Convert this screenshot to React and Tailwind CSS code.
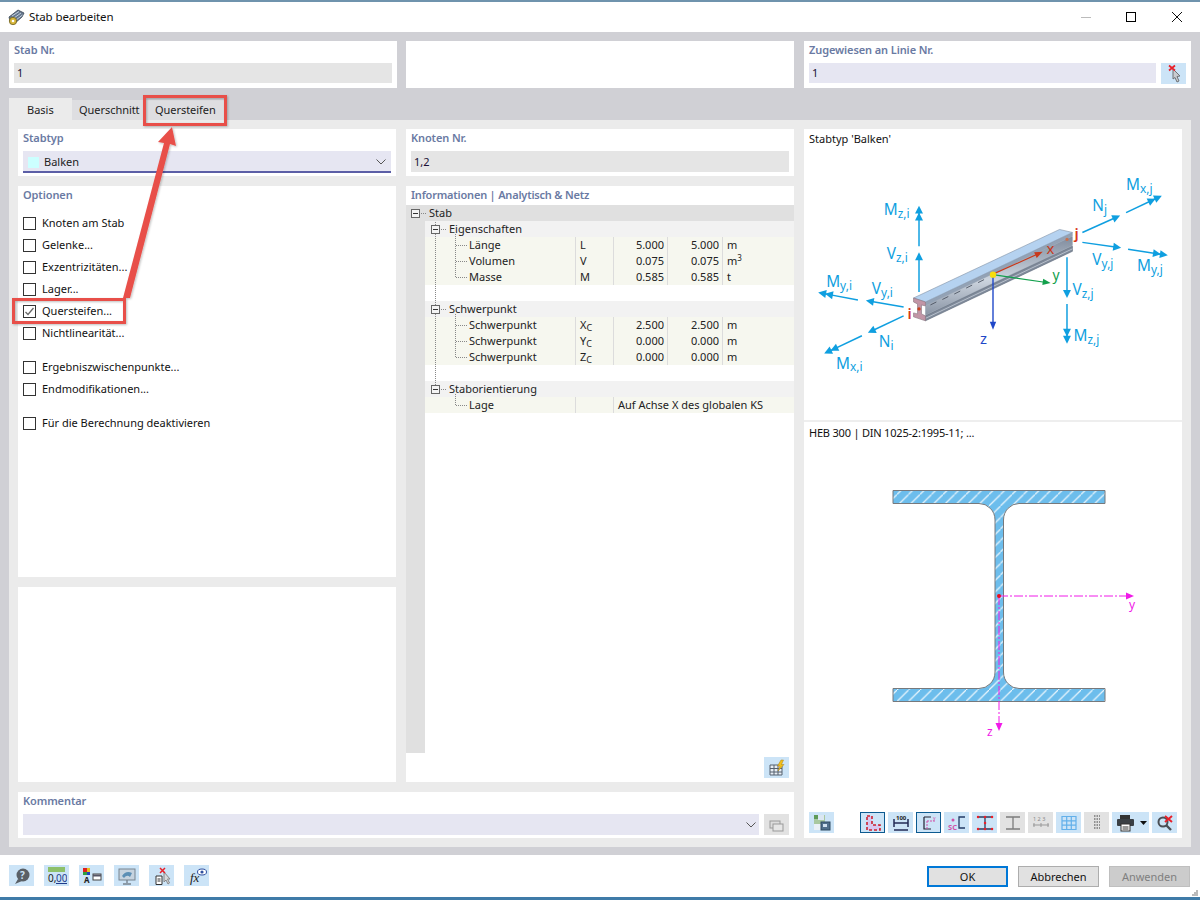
import React from "react";

const FONT = "font-['Noto_Sans','Open_Sans',sans-serif]";

function Panel({ title, className = "", children }) {
  return (
    <div className={"bg-white flex flex-col " + className}>
      {title && <div className="h-[22px] pl-[5px] text-[11px] leading-[17px] font-semibold tracking-[-0.1px] text-[#6a7aa3]">{title}</div>}
      {children}
    </div>
  );
}

function Field({ children, className = "", grey = true }) {
  return (
    <div className={"h-[20px] pl-[3px] text-[11px] leading-[20px] text-[#1a1033] " + (grey ? "bg-[#e5e5e5] " : "bg-[#e6e6f2] ") + className}>{children}</div>
  );
}

function Check({ label, checked }) {
  return (
    <div className="h-[22px] flex items-center pl-[5px]">
      <div className="w-[13px] h-[13px] border border-[#333] bg-white flex items-center justify-center">
        {checked && (
          <svg width="11" height="11" viewBox="0 0 11 11"><path d="M1.5 6 L4 8.5 L9.5 2" fill="none" stroke="#666" strokeWidth="1.3" /></svg>
        )}
      </div>
      <span className="ml-[6px] text-[11px] text-[#111]">{label}</span>
    </div>
  );
}

function Chevron() {
  return (
    <svg width="10" height="6" viewBox="0 0 10 6"><path d="M0.5 0.5 L5 5 L9.5 0.5" fill="none" stroke="#555" strokeWidth="1" /></svg>
  );
}

function Sub({ a, b }) {
  return <span>{a}<span className="text-[9px] relative top-[2px]">{b}</span></span>;
}

function Row({ label, sym, v1, v2, unit, span }) {
  return (
    <div className="h-[16px] flex bg-[#f6f7ef] text-[11px] leading-[16px] text-[#222]">
      <div className="w-[150px] pl-[44px]">{label}</div>
      <div className="w-[38px] border-l border-[#dcdcdc] pl-[4px]">{sym}</div>
      {span ? (
        <div className="flex-1 border-l border-[#dcdcdc] pl-[4px]">{span}</div>
      ) : (
        <>
          <div className="w-[54px] border-l border-[#dcdcdc] text-right pr-[3px]">{v1}</div>
          <div className="w-[55px] border-l border-[#dcdcdc] text-right pr-[3px]">{v2}</div>
          <div className="flex-1 border-l border-[#dcdcdc] pl-[4px]">{unit}</div>
        </>
      )}
    </div>
  );
}

function Group({ label }) {
  return <div className="h-[16px] bg-[#f2f2f2] pl-[24px] text-[11px] leading-[16px] text-[#222]">{label}</div>;
}

function TreeLines() {
  const box = (x, y) => (
    <g key={x + "-" + y}>
      <rect x={x + 0.5} y={y + 0.5} width="8" height="8" fill="#f4f4f4" stroke="#666" />
      <path d={`M${x + 2} ${y + 4.5} H${x + 7}`} stroke="#333" />
    </g>
  );
  const d = "1 1";
  return (
    <svg className="absolute left-0 top-0 pointer-events-none" width="70" height="220" viewBox="406 205 70 220">
      <path d="M435.5 222 V390" stroke="#888" strokeDasharray={d} fill="none" />
      <path d="M421 213.5 H427 M441 229.5 H447 M441 309.5 H447 M441 389.5 H447" stroke="#888" strokeDasharray={d} fill="none" />
      <path d="M455.5 234 V277.5 M455.5 314 V357.5 M455.5 394 V405.5" stroke="#888" strokeDasharray={d} fill="none" />
      <path d="M456 245.5 H467 M456 261.5 H467 M456 277.5 H467 M456 325.5 H467 M456 341.5 H467 M456 357.5 H467 M456 405.5 H467" stroke="#888" strokeDasharray={d} fill="none" />
      {box(411, 209)}
      {box(431, 225)}
      {box(431, 305)}
      {box(431, 385)}
    </svg>
  );
}

function Arrow({ x1, y1, x2, y2, dbl, c = "#0f9fe0", w = 1.5, h = 8, hw = 4 }) {
  const a = Math.atan2(y2 - y1, x2 - x1);
  const head = (tx, ty) => {
    const bx = tx - h * Math.cos(a), by = ty - h * Math.sin(a);
    const nx = -Math.sin(a) * hw, ny = Math.cos(a) * hw;
    return `${tx},${ty} ${bx + nx},${by + ny} ${bx - nx},${by - ny}`;
  };
  return (
    <g>
      <line x1={x1} y1={y1} x2={x2 - (h - 2) * Math.cos(a)} y2={y2 - (h - 2) * Math.sin(a)} stroke={c} strokeWidth={w} />
      <polygon points={head(x2, y2)} fill={c} />
      {dbl && <polygon points={head(x2 - 7 * Math.cos(a), y2 - 7 * Math.sin(a))} fill={c} />}
    </g>
  );
}

function L({ x, y, m, s }) {
  return (
    <text x={x} y={y} fill="#0f9fe0" fontSize="15.5" fontFamily="'Noto Sans',sans-serif">
      {m}
      <tspan fontSize="12" dy="3">{s}</tspan>
    </text>
  );
}

function BeamDiagram() {
  return (
    <svg width="378" height="270" viewBox="804 152 378 270">
      <defs>
        <linearGradient id="web" x1="0" y1="0" x2="0" y2="1">
          <stop offset="0" stopColor="#7f8b9d" />
          <stop offset="0.55" stopColor="#cdd5df" />
          <stop offset="1" stopColor="#8a95a5" />
        </linearGradient>
      </defs>
      <polygon points="925,303 1073,233 1073,252 925,322" fill="#a3adbb" />
      <polygon points="925,307 1073,237 1073,246 925,316" fill="url(#web)" />
      <polygon points="925,303 1073,233 1073,236.5 925,306.5" fill="#93a2b5" />
      <polygon points="925,317 1073,247 1073,252 925,322" fill="#7f8a9a" stroke="#646e7c" strokeWidth="0.5" />
      <path d="M925 319.5 L1073 249.5" stroke="#c6ced8" strokeWidth="0.8" />
      <polygon points="913,299 1060,230 1073,233 925,303" fill="#b5d2f0" stroke="#7f8fa3" strokeWidth="0.6" />
      <path d="M930 306 L936 303 M942 300.5 L948 297.5 M954 295 L960 292 M966 289 L972 286 M978 283.5 L984 280.5" stroke="#4a5260" strokeWidth="0.9" />
      <polygon points="913,299 925,303 925,307 921,306 921,315 925,317 925,322 913,318 913,314 917,315 917,305 913,303" fill="#c295a6" stroke="#85727e" strokeWidth="0.6" />
      <circle cx="918.5" cy="310" r="1.7" fill="#c8431f" />
      <circle cx="1067.5" cy="240" r="1.6" fill="#c8704f" />
      <Arrow x1={993} y1={275} x2={1043} y2={252.5} c="#c8381a" w={1.2} hw={3.2} />
      <Arrow x1={993} y1={275.5} x2={1051} y2={284} c="#12a04c" w={1.2} hw={3.2} />
      <Arrow x1={993} y1={276} x2={993} y2={331} c="#1f47c8" w={1.4} hw={3.2} />
      <circle cx="993" cy="275.5" r="3.2" fill="#f7dc0d" />
      <text x="1047" y="255" fill="#c8381a" fontSize="15" fontFamily="'Noto Sans',sans-serif">x</text>
      <text x="1053" y="281" fill="#12a04c" fontSize="14" fontFamily="'Noto Sans',sans-serif">y</text>
      <text x="980" y="345" fill="#1f47c8" fontSize="15" fontFamily="'Noto Sans',sans-serif">z</text>
      <text x="907" y="320" fill="#d8381a" fontSize="15" fontWeight="600" fontFamily="'Noto Sans',sans-serif">i</text>
      <text x="1075" y="240" fill="#d8381a" fontSize="15" fontWeight="600" fontFamily="'Noto Sans',sans-serif">j</text>
      <Arrow x1={918.5} y1={247} x2={918.5} y2={206} dbl />
      <Arrow x1={918.5} y1={293} x2={918.5} y2={253} />
      <Arrow x1={857} y1={301} x2={817} y2={293.5} dbl />
      <Arrow x1={903} y1={308} x2={865} y2={301.5} />
      <Arrow x1={903} y1={317} x2={867} y2={334} />
      <Arrow x1={861} y1={337} x2={823} y2={355} dbl />
      <Arrow x1={1083} y1={233} x2={1121} y2={216} />
      <Arrow x1={1127} y1={213} x2={1163} y2={196} dbl />
      <Arrow x1={1083} y1={243} x2={1122} y2={248.5} />
      <Arrow x1={1129} y1={250} x2={1169} y2={256} dbl />
      <Arrow x1={1067.5} y1={258} x2={1067.5} y2={299} />
      <Arrow x1={1067.5} y1={305} x2={1067.5} y2={345} dbl />
      <L x={883} y={215} m="M" s="z,i" />
      <L x={886} y={260} m="V" s="z,i" />
      <L x={825} y={288} m="M" s="y,i" />
      <L x={871} y={295} m="V" s="y,i" />
      <L x={878} y={348} m="N" s="i" />
      <L x={835} y={370} m="M" s="x,i" />
      <L x={1093} y={211} m="N" s="j" />
      <L x={1127} y={190} m="M" s="x,j" />
      <L x={1093} y={266} m="V" s="y,j" />
      <L x={1138} y={272} m="M" s="y,j" />
      <L x={1073} y={296} m="V" s="z,j" />
      <L x={1074} y={342} m="M" s="z,j" />
    </svg>
  );
}

function SectionDiagram() {
  const p = "M893 490.5 H1105 V503.5 H1019 A15.5 16.5 0 0 0 1003.5 520 V672 A15.5 16.5 0 0 0 1019 688.5 H1105 V701.5 H893 V688.5 H979 A16 16.5 0 0 0 995 672 V520 A16 16.5 0 0 0 979 503.5 H893 Z";
  return (
    <svg width="378" height="340" viewBox="804 440 378 340">
      <defs>
        <pattern id="hatch2" width="11.5" height="11.5" patternUnits="userSpaceOnUse">
          <rect width="11.5" height="11.5" fill="#6cbdec" />
          <path d="M-1 12.5 L12.5 -1" stroke="#eaf6fd" strokeWidth="1.2" />
        </pattern>
      </defs>
      <path d={p} fill="url(#hatch2)" stroke="#77797c" strokeWidth="1" />
      <line x1="999" y1="596" x2="1128" y2="596" stroke="#f01ae8" strokeWidth="1" strokeDasharray="9 2 2 2" />
      <polygon points="1134,596 1126,592.5 1126,599.5" fill="#f01ae8" />
      <line x1="999" y1="596" x2="999" y2="725" stroke="#f01ae8" strokeWidth="1" strokeDasharray="9 2 2 2" />
      <polygon points="999,731 995.5,723 1002.5,723" fill="#f01ae8" />
      <circle cx="999" cy="596" r="2" fill="#ee0a1a" />
      <text x="1129" y="609" fill="#f01ae8" fontSize="12" fontFamily="'Noto Sans',sans-serif">y</text>
      <text x="987" y="736" fill="#f01ae8" fontSize="12" fontFamily="'Noto Sans',sans-serif">z</text>
    </svg>
  );
}

function IconBtn({ x = 25, grey, sel, children, className = "" }) {
  return (
    <div
      className={
        "h-[21px] shrink-0 flex items-center justify-center " +
        (x === 37 ? "w-[37px] " : "w-[25px] ") +
        (grey ? "bg-[#e2e2e2] " : "bg-[#cce4f7] ") +
        (sel ? "border border-[#0c5a90] " : "") +
        className
      }
    >
      {children}
    </div>
  );
}

const S = ({ children, w = 20, h = 18, vb = "0 0 20 18" }) => <svg width={w} height={h} viewBox={vb}>{children}</svg>;

const cursorX = (
  <S w="20" h="20" vb="0 0 20 20">
    <path d="M9 5 L9 15 L11 13.5 L13 18 L15 17 L13 12.5 L16 12 Z" fill="#c9ccd0" stroke="#6f7276" />
    <path d="M5 1.5 L11 6.5 M11 1.5 L5 6.5" stroke="#e8202a" strokeWidth="1.7" />
  </S>
);

function TitleIcon() {
  return (
    <svg width="17" height="17" viewBox="0 0 17 17">
      <path d="M1 8 L10 1 L16 4 L14 8 L6 15 L2 12 Z" fill="#66788f" stroke="#3a4656" strokeWidth="0.8" />
      <path d="M4 7 L11 2.5 M6 9 L13 4 M8 11 L14.5 6" stroke="#c4d0df" strokeWidth="1" />
      <circle cx="5" cy="12" r="3.7" fill="#d6b53a" stroke="#6f6120" strokeWidth="0.8" />
      <circle cx="5" cy="12" r="1.3" fill="#fff" />
    </svg>
  );
}

export default function App() {
  return (
    <div className={"relative w-[1200px] h-[900px] bg-white overflow-hidden flex flex-col " + FONT}>
      <div className="h-[2px] bg-[#6f93ad] shrink-0" />
      <div className="h-[30px] shrink-0 flex items-center pl-[8px]">
        <TitleIcon />
        <span className="ml-[4px] text-[11.5px] tracking-[-0.1px] text-[#111]">Stab bearbeiten</span>
        <div className="ml-auto flex items-center pr-[18px]">
          <div className="w-[10px] h-[1px] bg-[#bbb]" />
          <div className="ml-[35px] w-[10px] h-[10px] border border-black" />
          <svg className="ml-[36px]" width="10" height="10" viewBox="0 0 10 10"><path d="M0 0 L10 10 M10 0 L0 10" stroke="#111" strokeWidth="1" /></svg>
        </div>
      </div>

      <div className="h-[823px] shrink-0 bg-[#d0d0d5] pt-[9px] px-[9px] flex flex-col">
        <div className="h-[47px] flex shrink-0">
          <Panel title="Stab Nr." className="w-[388px]">
            <div className="px-[5px]"><Field>1</Field></div>
          </Panel>
          <div className="w-[388px] ml-[9px] bg-white" />
          <Panel title="Zugewiesen an Linie Nr." className="w-[387px] ml-[10px]">
            <div className="pl-[5px] pr-[5px] flex gap-[5px]">
              <Field grey={false} className="flex-1">1</Field>
              <IconBtn>{cursorX}</IconBtn>
            </div>
          </Panel>
        </div>

        <div className="mt-[10px] h-[22px] flex shrink-0 items-end text-[11px] text-[#222]">
          <div className="w-[63px] h-[22px] bg-[#ebebeb] pl-[18px] leading-[24px]">Basis</div>
          <div className="w-[71px] h-[20px] bg-[#dedee1] pl-[7px] leading-[20px] tracking-[-0.05px]">Querschnitt</div>
          <div className="w-[81px] h-[20px] bg-[#dedee1] pl-[12px] leading-[20px] tracking-[-0.05px]">Quersteifen</div>
        </div>

        <div className="h-[727px] shrink-0 bg-[#ebebeb] p-[9px] flex">
          <div className="w-[776px] flex flex-col">
            <div className="h-[653px] flex gap-[10px]">
              <div className="w-[378px] flex flex-col gap-[10px]">
                <Panel title="Stabtyp" className="h-[47px]">
                  <div className="mx-[5px] h-[22px] pt-[2px] bg-[#e6e6f2] border-b-2 border-[#5b5ea6] flex items-center pl-[5px] pr-[5px]">
                    <div className="w-[11px] h-[11px] bg-[#ccffff]" />
                    <span className="ml-[5px] text-[11px] text-[#222]">Balken</span>
                    <span className="ml-auto flex"><Chevron /></span>
                  </div>
                </Panel>
                <Panel title="Optionen" className="h-[391px]">
                  <div className="pt-[4px]">
                    <Check label="Knoten am Stab" />
                    <Check label="Gelenke..." />
                    <Check label="Exzentrizitäten..." />
                    <Check label="Lager..." />
                    <Check label="Quersteifen..." checked />
                    <Check label="Nichtlinearität..." />
                    <div className="h-[12px]" />
                    <Check label="Ergebniszwischenpunkte..." />
                    <Check label="Endmodifikationen..." />
                    <div className="h-[12px]" />
                    <Check label="Für die Berechnung deaktivieren" />
                  </div>
                </Panel>
                <div className="h-[195px] bg-white" />
              </div>
              <div className="w-[388px] flex flex-col gap-[10px]">
                <Panel title="Knoten Nr." className="h-[47px]">
                  <div className="px-[5px]"><Field className="h-[21px] leading-[22px]">1,2</Field></div>
                </Panel>
                <div className="h-[596px] bg-white flex flex-col relative">
                  <div className="h-[19px] pl-[5px] text-[11px] leading-[17px] font-semibold tracking-[-0.2px] text-[#6a7aa3]">Informationen | Analytisch &amp; Netz</div>
                  <div className="relative flex-1 flex">
                    <div className="w-[19px] h-[548px] bg-[#e0e0e0] shrink-0" />
                    <div className="flex-1 flex flex-col">
                      <div className="h-[16px] bg-[#e0e0e0] pl-[4px] text-[11px] leading-[16px] text-[#222]">Stab</div>
                      <Group label="Eigenschaften" />
                      <Row label="Länge" sym="L" v1="5.000" v2="5.000" unit="m" />
                      <Row label="Volumen" sym="V" v1="0.075" v2="0.075" unit={<span>m<sup className="text-[8px]">3</sup></span>} />
                      <Row label="Masse" sym="M" v1="0.585" v2="0.585" unit="t" />
                      <div className="h-[16px]" />
                      <Group label="Schwerpunkt" />
                      <Row label="Schwerpunkt" sym={<Sub a="X" b="C" />} v1="2.500" v2="2.500" unit="m" />
                      <Row label="Schwerpunkt" sym={<Sub a="Y" b="C" />} v1="0.000" v2="0.000" unit="m" />
                      <Row label="Schwerpunkt" sym={<Sub a="Z" b="C" />} v1="0.000" v2="0.000" unit="m" />
                      <div className="h-[16px]" />
                      <Group label="Staborientierung" />
                      <Row label="Lage" sym="" span="Auf Achse X des globalen KS" />
                    </div>
                    <TreeLines />
                    <div className="absolute right-[5px] bottom-[4px]">
                      <IconBtn>
                        <S>
                          <path d="M3 6 H15 V16 H3 Z M7 6 V16 M11 6 V16 M3 9.5 H15 M3 13 H15" fill="#e8eef5" stroke="#55606e" strokeWidth="1" />
                          <path d="M14 1 L10.5 7 H13 L11 12 L17 5.5 H14.5 L16.5 1 Z" fill="#f3c019" stroke="#a8801a" strokeWidth="0.5" />
                        </S>
                      </IconBtn>
                    </div>
                  </div>
                </div>
              </div>
            </div>
            <Panel title="Kommentar" className="mt-[10px] h-[47px]">
              <div className="px-[5px] flex gap-[5px]">
                <div className="flex-1 h-[21px] bg-[#e6e6f2] flex items-center justify-end pr-[3px]"><Chevron /></div>
                <IconBtn grey>
                  <S>
                    <rect x="3" y="5" width="10" height="7" fill="#ddd" stroke="#999" />
                    <rect x="6" y="8" width="10" height="7" fill="#e6e6e6" stroke="#999" />
                  </S>
                </IconBtn>
              </div>
            </Panel>
          </div>

          <div className="w-[378px] ml-[10px] bg-white flex flex-col">
            <div className="h-[293px] border-b-2 border-[#eeeeee] flex flex-col">
              <div className="h-[23px] pl-[5px] pt-[1px] text-[11px] leading-[18px] text-[#111]">Stabtyp 'Balken'</div>
              <BeamDiagram />
            </div>
            <div className="flex-1 flex flex-col">
              <div className="h-[18px] pl-[5px] text-[11px] leading-[22px] tracking-[-0.2px] text-[#111]">HEB 300 | DIN 1025-2:1995-11; ...</div>
              <SectionDiagram />
              <div className="mt-auto mb-[5px] pl-[5px] flex">
                <IconBtn>
                  <S>
                    <rect x="2" y="1" width="11" height="9" fill="#a9c8a0" />
                    <rect x="2" y="1" width="4" height="4" fill="#5f9a58" />
                    <rect x="6" y="1" width="6" height="5" fill="#dbe7f2" />
                    <rect x="2" y="10" width="8" height="6" fill="#eaf0f6" />
                    <rect x="9" y="8" width="9" height="8" fill="#51708c" stroke="#2f4a63" />
                    <rect x="11" y="10" width="4" height="3" fill="#cfe0ef" />
                  </S>
                </IconBtn>
                <div className="w-[26px]" />
                <div className="flex gap-[3px]">
                  <IconBtn sel>
                    <S>
                      <path d="M4 2 H9 V11 H17 V16 H4 Z" fill="#d8c8f0" stroke="#cc2030" strokeWidth="1.6" strokeDasharray="3 2" />
                    </S>
                  </IconBtn>
                  <IconBtn>
                    <S>
                      <path d="M3 5 V13 M17 5 V13 M3 9 H17 M3 16 H17" stroke="#222a55" strokeWidth="1.5" />
                      <text x="5" y="6" fontSize="6" fontWeight="700" fill="#222" fontFamily="'Noto Sans',sans-serif">100</text>
                    </S>
                  </IconBtn>
                  <IconBtn sel>
                    <S>
                      <path d="M5 3 H12 M5 3 V15 H12" fill="none" stroke="#223" strokeWidth="1.2" />
                      <path d="M8 7 H16 M8 7 V15" fill="none" stroke="#d050a8" strokeWidth="1" strokeDasharray="2 1" />
                      <text x="14" y="6" fontSize="5" fill="#d050a8" fontFamily="'Noto Sans',sans-serif">y</text>
                    </S>
                  </IconBtn>
                  <IconBtn>
                    <S>
                      <circle cx="6" cy="6" r="1.5" fill="#d050a8" />
                      <text x="1" y="16" fontSize="7.5" fontWeight="700" fill="#d050a8" fontFamily="'Noto Sans',sans-serif">SC</text>
                      <path d="M18 3 H12 V14 H18" fill="none" stroke="#223a66" strokeWidth="1.3" />
                    </S>
                  </IconBtn>
                  <IconBtn>
                    <S>
                      <path d="M3 3 H17 M10 3 V15 M3 15 H17" stroke="#2c3e60" strokeWidth="1.3" />
                      <path d="M3 3 h.1 M10 3 h.1 M17 3 h.1 M3 15 h.1 M10 15 h.1 M17 15 h.1 M10 9 h.1" stroke="#e8202a" strokeWidth="2.4" strokeLinecap="round" />
                    </S>
                  </IconBtn>
                  <IconBtn grey>
                    <S><path d="M3 3 H17 M10 3 V15 M3 15 H17" stroke="#7c7c7c" strokeWidth="1.3" /></S>
                  </IconBtn>
                  <IconBtn grey>
                    <S>
                      <path d="M2 11 H18 M3 9 V13 M10 9 V13 M17 9 V13" stroke="#999" strokeWidth="1" />
                      <text x="2" y="7" fontSize="5.5" fill="#888" fontFamily="'Noto Sans',sans-serif">1 2 3</text>
                    </S>
                  </IconBtn>
                  <IconBtn>
                    <S><path d="M3 2.5 H17 V15.5 H3 Z M7.7 2.5 V15.5 M12.3 2.5 V15.5 M3 6.8 H17 M3 11.2 H17" fill="none" stroke="#63b0ea" strokeWidth="1.2" /></S>
                  </IconBtn>
                  <IconBtn grey>
                    <S><path d="M7 2 H13 M7 5 H13 M7 8 H13 M7 11 H13 M7 14 H13" stroke="#777" strokeWidth="1.6" strokeDasharray="1.5 1" /></S>
                  </IconBtn>
                  <IconBtn x={37}>
                    <svg width="32" height="18" viewBox="0 0 32 18">
                      <path d="M5 1 H15 V5 H5 Z" fill="#333" />
                      <rect x="2" y="5" width="17" height="7" rx="1" fill="#3a3f44" />
                      <rect x="6" y="10" width="9" height="7" fill="#fff" stroke="#333" />
                      <path d="M7.5 13 H13.5 M7.5 15 H13.5" stroke="#333" />
                      <path d="M25 7 H32 L28.5 11 Z" fill="#111" />
                    </svg>
                  </IconBtn>
                  <IconBtn>
                    <S>
                      <circle cx="8" cy="8" r="4.5" fill="none" stroke="#4a4f55" strokeWidth="2" />
                      <path d="M11 11 L16 16" stroke="#4a4f55" strokeWidth="2.4" />
                      <path d="M10 2 L17 8 M17 2 L10 8" stroke="#e8202a" strokeWidth="2" />
                    </S>
                  </IconBtn>
                </div>
              </div>
            </div>
          </div>
        </div>
      </div>

      <div className="flex-1 relative flex items-start pl-[9px] pt-[10px]">
        <div className="flex gap-[10px]">
          <IconBtn>
            <S>
              <circle cx="11" cy="8" r="6.5" fill="#5a6066" />
              <path d="M6 12 L3 17 L10 14 Z" fill="#5a6066" />
              <text x="8" y="12" fontSize="10" fontWeight="700" fill="#cce4f7" fontFamily="'Noto Sans',sans-serif">?</text>
            </S>
          </IconBtn>
          <IconBtn>
            <S w="21" h="20" vb="0 0 21 20">
              <rect x="2" y="1" width="17" height="5" fill="#8dc06a" />
              <text x="2" y="16" fontSize="10" fill="#222" fontFamily="'Noto Sans',sans-serif">0,</text>
              <text x="10" y="16" fontSize="10" fill="#1f3c8c" textDecoration="underline" fontFamily="'Noto Sans',sans-serif">00</text>
            </S>
          </IconBtn>
          <IconBtn>
            <S>
              <rect x="1" y="1" width="4" height="4" fill="#e02020" />
              <rect x="5" y="1" width="3" height="4" fill="#e8c020" />
              <rect x="1" y="5" width="4" height="3" fill="#30a040" />
              <rect x="5" y="5" width="3" height="3" fill="#2040c0" />
              <rect x="11" y="7" width="8" height="6" fill="#fff" stroke="#444" />
              <path d="M11 8.5 H19" stroke="#556" strokeWidth="2" />
              <text x="2" y="15.5" fontSize="8" fontWeight="700" fill="#222" fontFamily="'Noto Sans',sans-serif">A</text>
            </S>
          </IconBtn>
          <IconBtn>
            <S>
              <rect x="2" y="2" width="16" height="11" fill="#c6d3df" stroke="#77838f" />
              <path d="M5 9 Q9 3 15 6 L13 10 Q10 7 7 11 Z" fill="#5c8fb5" />
              <path d="M10 13 V16 M6 17 H14" stroke="#77838f" strokeWidth="1.4" />
            </S>
          </IconBtn>
          <IconBtn>
            <S>
              <path d="M4 9 H10 V17.5 H4 Z" fill="#fff" stroke="#333" />
              <path d="M5.5 12 H8.5 M5.5 14 H8.5" stroke="#333" />
              <path d="M12 5 L12 15 L14 13 L16 17 L17.5 16 L15.5 12 L18 12 Z" fill="#d5d8dc" stroke="#888" />
              <path d="M8 1 L13 6 M13 1 L8 6" stroke="#e8202a" strokeWidth="1.5" />
            </S>
          </IconBtn>
          <IconBtn>
            <S>
              <text x="3" y="15" fontSize="13" fontStyle="italic" fontFamily="'Liberation Serif',serif" fill="#222">fx</text>
              <ellipse cx="15" cy="5" rx="4.5" ry="3" fill="#fff" stroke="#3050a0" />
              <circle cx="15" cy="5" r="1.6" fill="#3050a0" />
            </S>
          </IconBtn>
        </div>
        <div className="absolute left-[927px] top-[11px] flex gap-[10px] text-[11px]">
          <div className="w-[81px] h-[21px] bg-[#e1e1e1] border-2 border-[#0078d7] text-center leading-[17px] text-[#111]">OK</div>
          <div className="w-[81px] h-[21px] bg-[#e1e1e1] border border-[#adadad] text-center leading-[19px] text-[#111]">Abbrechen</div>
          <div className="w-[81px] h-[21px] bg-[#cccccc] border border-[#bfbfbf] text-center leading-[19px] text-[#7f7f7f]">Anwenden</div>
        </div>
        <svg className="absolute right-[2px] bottom-[4px]" width="6" height="6" viewBox="0 0 6 6">
          <path d="M4 0 h2 v2 h-2z M2 2 h2 v2 h-2z M4 2 h2 v2 h-2z M0 4 h2 v2 h-2z M2 4 h2 v2 h-2z M4 4 h2 v2 h-2z" fill="#bbb" />
        </svg>
        <div className="absolute left-0 right-0 bottom-0 h-[3px] bg-[#3f7ba8]" />
      </div>

      <svg className="absolute left-0 top-0 pointer-events-none" width="1200" height="900" viewBox="0 0 1200 900">
        <defs>
          <filter id="sh" x="-20%" y="-20%" width="140%" height="140%">
            <feDropShadow dx="1" dy="1" stdDeviation="1" floodColor="#000" floodOpacity="0.25" />
          </filter>
        </defs>
        <g filter="url(#sh)">
          <polygon points="123,298 130,298 170,144 176,146 172,127 158,142 164,143" fill="#e8504a" />
          <rect x="144.5" y="96.5" width="81" height="28" fill="none" stroke="#e8504a" strokeWidth="3" />
          <rect x="13.5" y="299.5" width="111" height="23" fill="none" stroke="#e8504a" strokeWidth="3" />
        </g>
      </svg>
    </div>
  );
}
